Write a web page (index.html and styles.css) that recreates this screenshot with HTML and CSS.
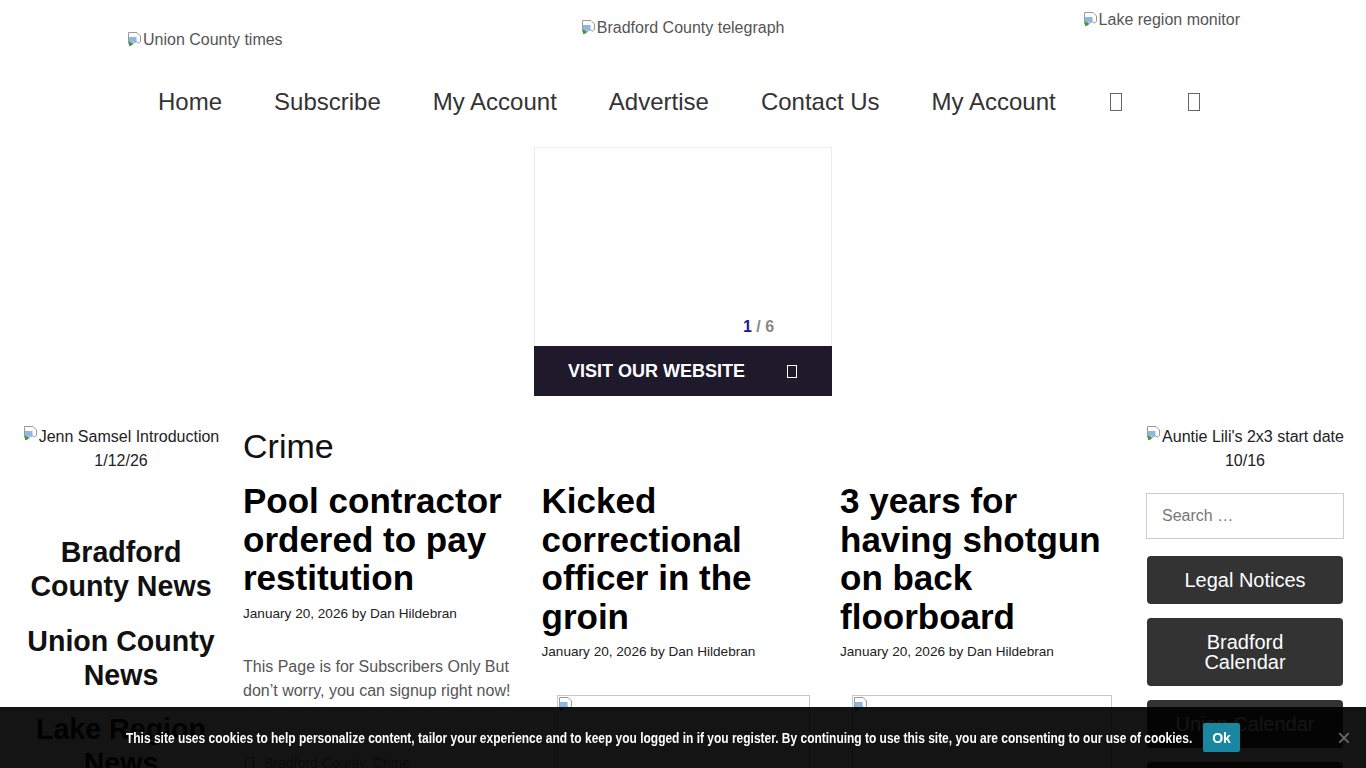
FILE: index.html
```html
<!DOCTYPE html>
<html lang="en">
<head>
<meta charset="utf-8">
<title>Crime</title>
<link rel="stylesheet" href="styles.css">
</head>
<body>
<header class="site-header">
  <div class="logos">
    <a class="logo logo-union" href="#"><svg class="broken" viewBox="0 0 16 16" width="16" height="16"><path d="M1.5 1.5h8.5l3.5 3.5v5.5l-2 1.5-2.5-1.5-3 2-2.5-1.5-2 1.5z" fill="#fff" stroke="#9a9a9a"/><path d="M2 6h7.5v5l-2 1.2-2.5-1.5L2 12.5z" fill="#8fb8e0"/><path d="M2 15V10.5l4.5 2.5L3.5 15z" fill="#3e9a35"/></svg>Union County times</a>
    <a class="logo logo-bradford" href="#"><svg class="broken" viewBox="0 0 16 16" width="16" height="16"><path d="M1.5 1.5h8.5l3.5 3.5v5.5l-2 1.5-2.5-1.5-3 2-2.5-1.5-2 1.5z" fill="#fff" stroke="#9a9a9a"/><path d="M2 6h7.5v5l-2 1.2-2.5-1.5L2 12.5z" fill="#8fb8e0"/><path d="M2 15V10.5l4.5 2.5L3.5 15z" fill="#3e9a35"/></svg>Bradford County telegraph</a>
    <a class="logo logo-lake" href="#"><svg class="broken" viewBox="0 0 16 16" width="16" height="16"><path d="M1.5 1.5h8.5l3.5 3.5v5.5l-2 1.5-2.5-1.5-3 2-2.5-1.5-2 1.5z" fill="#fff" stroke="#9a9a9a"/><path d="M2 6h7.5v5l-2 1.2-2.5-1.5L2 12.5z" fill="#8fb8e0"/><path d="M2 15V10.5l4.5 2.5L3.5 15z" fill="#3e9a35"/></svg>Lake region monitor</a>
  </div>
  <nav class="main-nav">
    <a href="#">Home</a>
    <a href="#">Subscribe</a>
    <a href="#">My Account</a>
    <a href="#">Advertise</a>
    <a href="#">Contact Us</a>
    <a href="#">My Account</a>
    <a href="#" class="nav-icon"><span class="tofu"></span></a>
    <a href="#" class="nav-icon nav-icon-last"><span class="tofu"></span></a>
  </nav>
</header>

<section class="ad-wrap">
  <div class="ad">
    <div class="ad-body"><span class="pager"><b>1</b> / 6</span></div>
    <a class="ad-cta" href="#"><span>VISIT OUR WEBSITE</span><span class="tofu tofu-light"></span></a>
  </div>
</section>

<main class="layout">
  <aside class="side side-left">
    <p class="alt-img"><svg class="broken" viewBox="0 0 16 16" width="16" height="16"><path d="M1.5 1.5h8.5l3.5 3.5v5.5l-2 1.5-2.5-1.5-3 2-2.5-1.5-2 1.5z" fill="#fff" stroke="#9a9a9a"/><path d="M2 6h7.5v5l-2 1.2-2.5-1.5L2 12.5z" fill="#8fb8e0"/><path d="M2 15V10.5l4.5 2.5L3.5 15z" fill="#3e9a35"/></svg>Jenn Samsel Introduction 1/12/26</p>
    <div class="news-links">
      <a href="#">Bradford County News</a>
      <a href="#">Union County News</a>
      <a href="#">Lake Region News</a>
    </div>
  </aside>

  <section class="content">
    <h1 class="page-title">Crime</h1>
    <div class="posts">
      <article class="post">
        <h2 class="post-title">Pool contractor ordered to pay restitution</h2>
        <p class="post-meta">January 20, 2026 by Dan Hildebran</p>
        <p class="post-excerpt">This Page is for Subscribers Only But don’t worry, you can signup right now!</p>
        <p class="post-cats"><span class="tofu tofu-small"></span>Bradford County, Crime</p>
      </article>
      <article class="post">
        <h2 class="post-title">Kicked correctional officer in the groin</h2>
        <p class="post-meta">January 20, 2026 by Dan Hildebran</p>
        <div class="post-image"><svg class="broken" viewBox="0 0 16 16" width="16" height="16"><path d="M1.5 1.5h8.5l3.5 3.5v5.5l-2 1.5-2.5-1.5-3 2-2.5-1.5-2 1.5z" fill="#fff" stroke="#9a9a9a"/><path d="M2 6h7.5v5l-2 1.2-2.5-1.5L2 12.5z" fill="#8fb8e0"/><path d="M2 15V10.5l4.5 2.5L3.5 15z" fill="#3e9a35"/></svg></div>
      </article>
      <article class="post">
        <h2 class="post-title">3 years for having shotgun on back floorboard</h2>
        <p class="post-meta">January 20, 2026 by Dan Hildebran</p>
        <div class="post-image post-image-wide"><svg class="broken" viewBox="0 0 16 16" width="16" height="16"><path d="M1.5 1.5h8.5l3.5 3.5v5.5l-2 1.5-2.5-1.5-3 2-2.5-1.5-2 1.5z" fill="#fff" stroke="#9a9a9a"/><path d="M2 6h7.5v5l-2 1.2-2.5-1.5L2 12.5z" fill="#8fb8e0"/><path d="M2 15V10.5l4.5 2.5L3.5 15z" fill="#3e9a35"/></svg></div>
      </article>
    </div>
  </section>

  <aside class="side side-right">
    <p class="alt-img"><svg class="broken" viewBox="0 0 16 16" width="16" height="16"><path d="M1.5 1.5h8.5l3.5 3.5v5.5l-2 1.5-2.5-1.5-3 2-2.5-1.5-2 1.5z" fill="#fff" stroke="#9a9a9a"/><path d="M2 6h7.5v5l-2 1.2-2.5-1.5L2 12.5z" fill="#8fb8e0"/><path d="M2 15V10.5l4.5 2.5L3.5 15z" fill="#3e9a35"/></svg>Auntie Lili's 2x3 start date 10/16</p>
    <form class="search"><input type="search" placeholder="Search …"></form>
    <div class="side-buttons">
      <a href="#" class="side-btn">Legal Notices</a>
      <a href="#" class="side-btn">Bradford Calendar</a>
      <a href="#" class="side-btn">Union Calendar</a>
      <a href="#" class="side-btn">Lake Calendar</a>
    </div>
  </aside>
</main>

<div class="cookie-bar">
  <p class="cookie-text"><span class="cookie-inner">This site uses cookies to help personalize content, tailor your experience and to keep you logged in if you register. By continuing to use this site, you are consenting to our use of cookies.</span></p>
  <a href="#" class="cookie-ok">Ok</a>
  <a href="#" class="cookie-close">×</a>
</div>
</body>
</html>
```

FILE: styles.css
```css
* { box-sizing: border-box; }
html, body { margin: 0; padding: 0; }
body {
  font-family: "Liberation Sans", Arial, sans-serif;
  color: #222;
  background: #fff;
}
a { text-decoration: none; color: inherit; }
p { margin: 0; }

.broken { flex: none; display: inline-block; vertical-align: top; }

/* header */
.logos {
  height: 60px;
  padding: 11px 126px 0 127px;
  display: flex;
  justify-content: space-between;
  align-items: flex-start;
}
.logo {
  display: flex;
  align-items: flex-start;
  font-size: 16px;
  line-height: 18px;
  color: #555;
}
.logo-union { padding-top: 20px; }
.logo-bradford { padding-top: 8px; }
.logo-lake { padding-top: 0; }

.main-nav {
  display: flex;
  align-items: center;
  padding: 28px 0 31px 158px;
  gap: 52px;
}
.main-nav a {
  font-size: 24px;
  line-height: 28px;
  color: #333;
}
.nav-icon { display: flex; width: 16px; justify-content: center; }
.nav-icon-last { margin-left: 10px; }
.tofu {
  display: inline-block;
  width: 12px;
  height: 18px;
  border: 1px solid #666;
}
.tofu-light { border-color: #fff; width: 10px; height: 13px; }
.tofu-small { width: 9px; height: 12px; border-color: #888; margin-right: 10px; }

/* ad */
.ad-wrap { display: flex; justify-content: center; }
.ad {
  width: 298px;
  border: 1px solid #ececec;
  border-bottom: 0;
}
.ad-body {
  height: 198px;
  display: flex;
  align-items: flex-end;
  padding: 0 0 10px 208px;
}
.pager {
  font-size: 16px;
  font-weight: bold;
  color: #888;
  line-height: 18px;
}
.pager b { color: #1b1b96; }
.ad-cta {
  height: 50px;
  margin: 0 -1px;
  background: #1e1a2c;
  color: #fff;
  display: flex;
  align-items: center;
  padding: 0 35px 0 34px;
  justify-content: space-between;
  font-size: 18px;
  font-weight: bold;
}

/* layout */
.layout {
  display: grid;
  grid-template-columns: 198px 1fr 198px;
  column-gap: 23px;
  padding: 29px 22px 0 22px;
}
.alt-img {
  text-align: center;
  font-size: 16px;
  line-height: 24px;
  color: #222;
}
.news-links {
  margin-top: 62px;
  display: flex;
  flex-direction: column;
  gap: 20px;
  text-align: center;
}
.news-links a {
  font-size: 28.6px;
  line-height: 34.3px;
  font-weight: bold;
  color: #111;
}

.page-title {
  margin: 1px 0 0 0;
  font-size: 34px;
  line-height: 41px;
  font-weight: normal;
  color: #111;
}
.posts {
  margin-top: 15px;
  display: grid;
  grid-template-columns: repeat(3, 1fr);
  column-gap: 15.5px;
}
.post-title {
  margin: 0;
  font-size: 35px;
  line-height: 38.5px;
  font-weight: bold;
  color: #000;
}
.post-meta {
  margin-top: 7px;
  font-size: 13.6px;
  line-height: 17px;
  color: #222;
}
.post-excerpt {
  margin-top: 33px;
  font-size: 16px;
  line-height: 24px;
  color: #555;
}
.post-cats {
  margin-top: 52px;
  font-size: 14px;
  color: #888;
  display: flex;
  align-items: center;
  padding-left: 2px;
}
.post-image {
  margin: 35px 15px 0 15px;
  height: 120px;
  border: 1px solid #c8c8c8;
}
.post-image-wide { margin: 35px 11px 0 12px; }

.search { margin: 20px 0 0 0; }
.search input {
  width: 100%;
  height: 46px;
  border: 1px solid #ccc;
  padding: 0 15px;
  font-family: "Liberation Sans", Arial, sans-serif;
  font-size: 16px;
  color: #333;
  outline: none;
}
.search input::placeholder { color: #777; }
.side-buttons {
  margin-top: 17px;
  display: flex;
  flex-direction: column;
  gap: 14px;
  padding: 0 1px;
}
.side-btn {
  background: #333;
  color: #fff;
  border-radius: 4px;
  padding: 14px 20px;
  font-size: 20px;
  line-height: 20px;
  text-align: center;
}

/* cookie */
.cookie-bar {
  position: fixed;
  left: 0; right: 0; bottom: 0;
  height: 61px;
  background: rgba(0, 0, 0, 0.92);
  display: flex;
  align-items: center;
  padding-left: 126px;
}
.cookie-text {
  width: 1066px;
  flex: none;
  color: #fff;
  font-weight: bold;
  font-size: 14px;
  line-height: 18px;
  white-space: nowrap;
}
.cookie-inner {
  display: inline-block;
  transform: scaleX(0.855);
  transform-origin: left center;
}
.cookie-ok {
  margin-left: 11px;
  width: 37px;
  height: 29px;
  background: #1a87a0;
  color: #fff;
  font-weight: bold;
  font-size: 14px;
  display: flex;
  align-items: center;
  justify-content: center;
  border-radius: 2px;
}
.cookie-close {
  margin-left: auto;
  margin-right: 15px;
  color: #6a6a6a;
  font-size: 24px;
  line-height: 24px;
}
```
